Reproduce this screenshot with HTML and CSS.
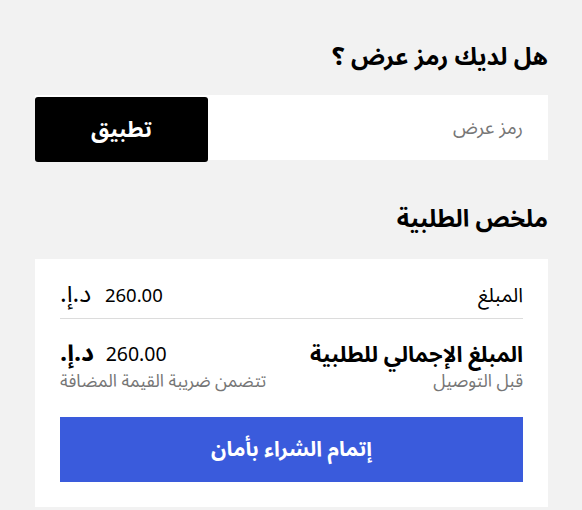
FILE: index.html
```html
<!DOCTYPE html>
<html lang="ar" dir="rtl">
<head>
<meta charset="utf-8">
<link rel="stylesheet" href="styles.css">
</head>
<body>
<main class="page">
  <h2 class="title title-promo">هل لديك رمز عرض ؟</h2>
  <form class="promo">
    <input class="promo-input" type="text" placeholder="رمز عرض">
    <button class="promo-btn" type="button">تطبيق</button>
  </form>
  <h2 class="title title-summary">ملخص الطلبية</h2>
  <section class="card">
    <div class="row">
      <span class="label">المبلغ</span>
      <span class="amount"><span class="num">260.00</span> <span class="cur">د.إ.</span></span>
    </div>
    <hr class="divider">
    <div class="row total">
      <div class="col">
        <strong class="total-label">المبلغ الإجمالي للطلبية</strong>
        <small class="note">قبل التوصيل</small>
      </div>
      <div class="col col-end">
        <span class="amount total-amount"><span class="num">260.00</span> <strong class="cur">د.إ.</strong></span>
        <small class="note">تتضمن ضريبة القيمة المضافة</small>
      </div>
    </div>
    <button class="checkout" type="button">إتمام الشراء بأمان</button>
  </section>
</main>
</body>
</html>
```
FILE: styles.css
```css
* { box-sizing: border-box; }
html, body { margin: 0; padding: 0; }
body {
  background: #f2f2f2;
  font-family: "Noto Sans Arabic", "Noto Sans", "DejaVu Sans", sans-serif;
  color: #000;
}
.page {
  padding: 0 34px 0 35px;
}
.title {
  margin: 0;
  font-size: 24px;
  font-weight: 700;
  line-height: 32px;
}
.title-promo { padding-top: 42px; margin-bottom: 21px; }
.title-summary { margin-top: 44px; margin-bottom: 23px; }
.promo {
  display: flex;
  align-items: flex-start;
  height: 65px;
  background: #fff;
  margin: 0;
}
.promo-input {
  flex: 1;
  min-width: 0;
  width: 0;
  height: 65px;
  border: 0;
  background: transparent;
  padding: 0 25px;
  font: inherit;
  font-size: 19px;
  color: #000;
  outline: none;
}
.promo-input::placeholder { color: #767676; }
.promo-btn {
  flex: 0 0 173px;
  width: 173px;
  height: 65px;
  margin-top: 2px;
  background: #000;
  color: #fff;
  border: 0;
  border-radius: 3px;
  font: inherit;
  font-size: 22px;
  font-weight: 700;
  line-height: 1;
}
.card {
  background: #fff;
  padding: 25px;
}
.row {
  display: flex;
  justify-content: space-between;
  align-items: flex-start;
}
.label {
  font-size: 20px;
  line-height: 24px;
}
.amount {
  display: block;
  height: 24px;
  font-size: 18px;
  line-height: 24px;
  white-space: nowrap;
}
.num { font-size: 18.5px; margin-inline-end: 9px; }
.cur { font-size: 25px; line-height: 0; }
.divider {
  border: 0;
  border-top: 1px solid #dcdcdc;
  margin: 10px 0 22px;
}
.col { display: flex; flex-direction: column; }
.col-end { align-items: flex-end; }
.total-label {
  font-size: 22px;
  font-weight: 700;
  line-height: 28px;
}
.total-amount { height: 28px; line-height: 28px; }
.total-amount .num { font-size: 19.5px; margin-inline-end: 7px; }
.total-amount .cur { font-weight: 700; }
.note {
  font-size: 17.5px;
  line-height: 26px;
  color: #767676;
}
.checkout {
  display: block;
  width: 100%;
  height: 65px;
  margin-top: 22px;
  background: #3a5bdc;
  color: #fff;
  border: 0;
  font: inherit;
  font-size: 21px;
  font-weight: 700;
  line-height: 1;
}
```
